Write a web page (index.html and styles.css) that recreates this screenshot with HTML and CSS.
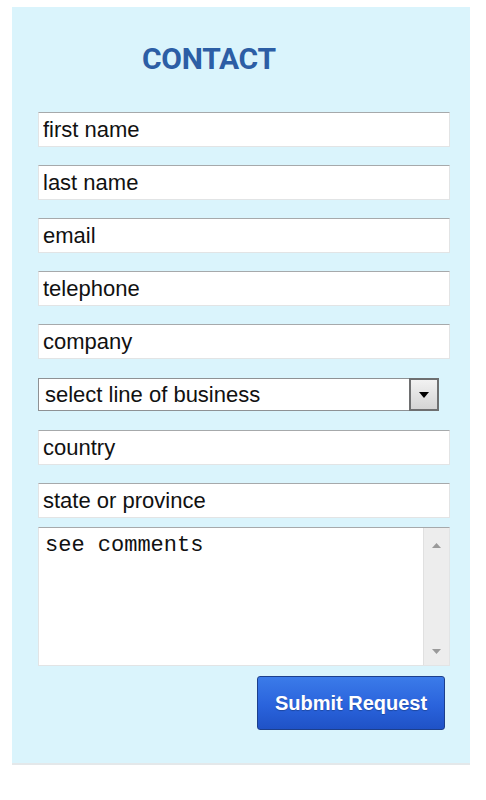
FILE: index.html
```html
<!DOCTYPE html>
<html lang="en">
<head>
<meta charset="utf-8">
<title>Contact</title>
<link rel="stylesheet" href="styles.css">
</head>
<body>
<div class="panel">
  <h1 class="title">CONTACT</h1>
  <form class="form">
    <input class="field" type="text" value="first name">
    <input class="field" type="text" value="last name">
    <input class="field" type="text" value="email">
    <input class="field" type="text" value="telephone">
    <input class="field" type="text" value="company">
    <div class="select">
      <span class="select-text">select line of business</span>
      <span class="select-btn">
        <svg width="10" height="6" viewBox="0 0 10 6"><path d="M0 0H10L5 6Z" fill="#000"/></svg>
      </span>
    </div>
    <input class="field" type="text" value="country">
    <input class="field" type="text" value="state or province">
    <div class="comments">
      <div class="comments-text">see comments</div>
      <div class="scrollbar">
        <svg width="9" height="5" viewBox="0 0 9 5"><path d="M0 5H9L4.5 0Z" fill="#9a9a9a"/></svg>
        <svg width="9" height="5" viewBox="0 0 9 5"><path d="M0 0H9L4.5 5Z" fill="#9a9a9a"/></svg>
      </div>
    </div>
    <div class="actions">
      <button class="submit" type="button">Submit Request</button>
    </div>
  </form>
</div>
</body>
</html>
```

FILE: styles.css
```css
html, body {
  margin: 0;
  padding: 0;
  background: #ffffff;
}

body {
  font-family: "Liberation Sans", Arial, sans-serif;
}

.panel {
  box-sizing: border-box;
  width: 458px;
  height: 758px;
  margin: 7px 0 0 12px;
  padding: 37px 0 0 26px;
  background: #daf4fc;
  border-bottom: 2px solid #e4e8ea;
}

.title {
  margin: 0 0 38px 104px;
  font-family: Roboto, "Liberation Sans", sans-serif;
  font-weight: 700;
  font-size: 30px;
  line-height: 30px;
  letter-spacing: -0.3px;
  color: #2c5ea5;
}

.form {
  display: flex;
  flex-direction: column;
  width: 412px;
}

.field {
  box-sizing: border-box;
  display: block;
  width: 412px;
  height: 35px;
  margin: 0 0 18px 0;
  padding: 0 4px;
  border: 1px solid #e2e4e5;
  border-top: 1px solid #a6a9ab;
  background: #ffffff;
  font-family: "Liberation Sans", Arial, sans-serif;
  font-size: 22px;
  color: #111111;
  outline: none;
}

.select {
  box-sizing: border-box;
  display: flex;
  align-items: stretch;
  width: 401px;
  height: 35px;
  margin: 0 0 18px 0;
  padding: 1px 0;
  background: transparent;
}

.select-text {
  flex: 1;
  display: flex;
  align-items: center;
  padding-left: 6px;
  background: #ffffff;
  border: 1px solid #8e9194;
  border-right: none;
  font-size: 22px;
  color: #111111;
}

.select-btn {
  box-sizing: border-box;
  width: 30px;
  display: flex;
  align-items: center;
  justify-content: center;
  border: 2px solid #6e6f70;
  background: linear-gradient(#f2f2f2, #d4d4d4);
}

.comments {
  box-sizing: border-box;
  display: flex;
  width: 412px;
  height: 139px;
  margin: -9px 0 10px 0;
  border: 1px solid #e2e4e5;
  border-top: 1px solid #a6a9ab;
  background: #ffffff;
}

.comments-text {
  flex: 1;
  padding: 5px 0 0 6px;
  font-family: "Liberation Mono", "Courier New", monospace;
  font-size: 22px;
  color: #111111;
}

.scrollbar {
  width: 26px;
  display: flex;
  flex-direction: column;
  justify-content: space-between;
  align-items: center;
  padding: 15px 0 11px;
  box-sizing: border-box;
  background: #ededed;
  border-left: 1px solid #e0e0e0;
}

.actions {
  display: flex;
  justify-content: flex-end;
  padding-right: 5px;
}

.submit {
  box-sizing: border-box;
  width: 188px;
  height: 54px;
  padding: 0;
  border: 1px solid #1c3f8c;
  border-radius: 3px;
  background: linear-gradient(#3b7be9, #2a63dc 55%, #1f52c6);
  font-family: "Liberation Sans", Arial, sans-serif;
  font-weight: 700;
  font-size: 20px;
  color: #ffffff;
  text-shadow: 0 1px 1px rgba(0, 0, 0, 0.25);
  cursor: pointer;
}
```
